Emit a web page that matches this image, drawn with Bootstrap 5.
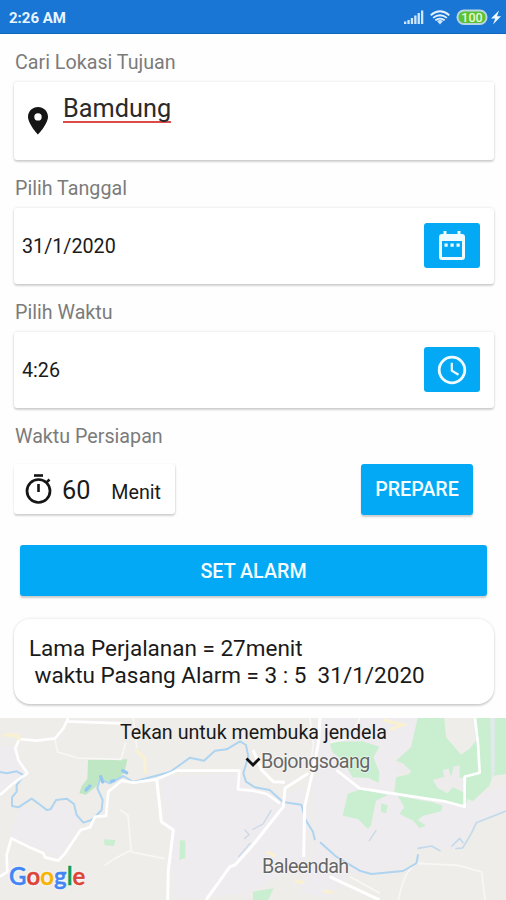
<!DOCTYPE html>
<html lang="id">
<head>
<meta charset="utf-8">
<meta name="viewport" content="width=device-width, initial-scale=1">
<title>Alarm Perjalanan</title>
<link href="https://cdn.jsdelivr.net/npm/bootstrap@5.3.0/dist/css/bootstrap.min.css" rel="stylesheet">
<style>
  body { font-family: Roboto, "Liberation Sans", sans-serif; font-size: 19.7px; line-height: 24px; color: #1a1a1a; background: #fefefe; }
  .screen { width: 506px; height: 900px; }
  .statusbar { height: 34px; background: #1976d4; border-bottom: 1px solid #1266bf; font-size: 15px; color: #e9f5ff; padding: 3px 3px 0 9px; }
  .form-area { padding: 0 12px 0 14px; height: 684px; }
  .field-label { margin: 17px 0 7px 1px; color: #7b7b7b; }
  .panel { background: #fff; border-radius: 3px; box-shadow: 0 2px 2px rgba(0,0,0,.15), 0 0 3px rgba(0,0,0,.13); }
  .panel-place { height: 78px; padding: 12px 14px; }
  .pin { margin-top: 13px; }
  .panel-pick { height: 76px; padding: 0 14px 0 8px; }
  .pick-value { padding-top: 2px; }
  .place-name { font-size: 25.3px; line-height: 29px; height: 29px; margin-left: 15px; border-bottom: 2px solid #dc4a4a; color: #2a2a2a; }
  .btn-sky { --bs-btn-bg: #03a9f4; --bs-btn-color: #f4fcff; --bs-btn-border-width: 0; --bs-btn-border-radius: 3px; --bs-btn-hover-bg: #039be5; --bs-btn-hover-color: #fff; --bs-btn-padding-x: 0; --bs-btn-padding-y: 0; --bs-btn-font-size: 19.7px; --bs-btn-font-weight: 500; height: 51px; box-shadow: 0 2px 2px rgba(0,0,0,.2); }
  .btn-pick { width: 56px; height: 45px; margin-bottom: 1px; box-shadow: none; }
  .btn-prepare { width: 112px; margin-right: 21px; padding-top: 1px; }
  .btn-set { margin: 30px 7px 0 6px; width: 467px; padding-top: 2px; }
  .prep { width: 161px; height: 50px; padding: 0 14px 0 11px; box-shadow: 0 2px 2px rgba(0,0,0,.17), 1px 0 2px rgba(0,0,0,.07); }
  .prep-num { font-size: 25.3px; margin-left: 10px; padding-top: 3px; }
  .prep-unit { padding-top: 7px; }
  .result { margin-top: 23px; height: 85px; border-radius: 16px; padding: 16px 15px; font-size: 22.5px; line-height: 27px; white-space: pre; }
  .map-area { height: 182px; background: #efedea; }
  .map-caption { top: 3px; left: 1px; right: 0; }
  .map-town { color: #666; text-shadow: 0 0 2px #fff, 0 0 2px #fff; letter-spacing: -.62px; }
  .town-a { left: 245px; top: 32px; }
  .town-b { left: 262px; top: 137px; }
  .google { left: 9px; top: 144px; font: 600 24px/28px Lato, Roboto, sans-serif; letter-spacing: .1px; text-shadow: 0 0 2px #fff, 0 0 3px #fff; -webkit-text-stroke: .5px; }
  .g-blue { color: #4285f4; } .g-red { color: #db4437; } .g-gold { color: #f4b400; } .g-green { color: #0f9d58; }
</style>
<script src="https://cdn.jsdelivr.net/npm/bootstrap@5.3.0/dist/js/bootstrap.bundle.min.js"></script>
</head>
<body>
<div class="screen d-flex flex-column overflow-hidden">
  <header class="statusbar d-flex align-items-center justify-content-between flex-shrink-0">
    <span class="fw-bold">2:26 AM</span>
    <svg width="100" height="20" viewBox="0 0 100 20" aria-hidden="true">
      <g fill="#d0e7fb">
        <path d="M1 13.500h2.300V16H1zM4.400 12h2.300v4H4.400zM7.800 10h2.300v6H7.800zM11.200 7.500h2.300V16h-2.300zM14.600 5h2.300v11h-2.300zM18 2.500h2.300V16H18z"/>
        <path d="M37 16.500l-3-3.500q3-2 6 0z"/>
      </g>
      <g fill="none" stroke="#e4f2fe" stroke-width="1.800">
        <path d="M27.700 7.200q9.300-7.800 18.600 0M30.100 9.900q6.900-5.300 13.800 0M32.300 12.300q4.700-3.400 9.400 0"/>
      </g>
      <rect x="54.500" y="2.500" width="29" height="13.500" rx="6.500" fill="#5bc236" stroke="#b9d5e4" stroke-width="2"/>
      <text x="69" y="13.800" text-anchor="middle" font-family="Roboto" font-size="12.500" font-weight="500" fill="#e6fbd6">100</text>
      <path d="M96 2.500l-8 8h4.200L90 16.500l8-8.200h-4z" fill="#eef8ff"/>
    </svg>
  </header>

  <main class="form-area flex-shrink-0 d-flex flex-column">
    <div class="field-label">Cari Lokasi Tujuan</div>
    <div class="panel panel-place d-flex align-items-start">
      <svg class="pin" width="20" height="28" viewBox="0 0 20 28"><path fill="#151515" fill-rule="evenodd" d="M10 0C4.400 0 0 4.300 0 9.700 0 17 10 27.500 10 27.500S20 17 20 9.700C20 4.300 15.600 0 10 0zm0 6.200a3.700 3.700 0 1 1 0 7.400 3.700 3.700 0 0 1 0-7.400z"/></svg>
      <div class="place-name">Bamdung</div>
    </div>

    <div class="field-label">Pilih Tanggal</div>
    <div class="panel panel-pick d-flex align-items-center justify-content-between">
      <span class="pick-value">31/1/2020</span>
      <button class="btn btn-sky btn-pick d-flex align-items-center justify-content-center" aria-label="Pilih tanggal">
        <svg width="26" height="30" viewBox="0 0 26 30"><path fill="#f0fbff" fill-rule="evenodd" d="M4.500 0h3v3h11V0h3v3H23q3 0 3 3v20q0 3-3 3H3q-3 0-3-3V6q0-3 3-3h1.500zM3 10v16h20V10zM5.500 12.500h3.200v3.200H5.500zm6 0h3.200v3.200h-3.200zm6 0h3.200v3.200h-3.200z"/></svg>
      </button>
    </div>

    <div class="field-label">Pilih Waktu</div>
    <div class="panel panel-pick d-flex align-items-center justify-content-between">
      <span class="pick-value">4:26</span>
      <button class="btn btn-sky btn-pick d-flex align-items-center justify-content-center" aria-label="Pilih waktu">
        <svg width="30" height="30" viewBox="0 0 30 30" fill="none" stroke="#f0fbff"><circle cx="15" cy="15" r="12.800" stroke-width="2.800"/><path d="M14.800 7.700v8l6.700 4" stroke-width="2.200"/></svg>
      </button>
    </div>

    <div class="field-label mb-3">Waktu Persiapan</div>
    <div class="d-flex justify-content-between" style="margin-top:-1px">
      <div class="panel prep d-flex align-items-center">
        <svg width="27" height="31" viewBox="0 0 27 31" fill="none" stroke="#151515"><path d="M9 1.500h9" stroke-width="2.600"/><circle cx="13.500" cy="17" r="11.500" stroke-width="2.700"/><path d="M13.500 10v8" stroke-width="2.600"/><path d="M21.300 8.700l3.200-3.200" stroke-width="2.600"/></svg>
        <span class="prep-num">60</span>
        <span class="prep-unit ms-auto">Menit</span>
      </div>
      <button class="btn btn-sky btn-prepare">PREPARE</button>
    </div>

    <button class="btn btn-sky btn-set flex-shrink-0">SET ALARM</button>

    <div class="panel result">Lama Perjalanan = 27menit
 waktu Pasang Alarm = 3 : 5  31/1/2020</div>
  </main>

  <section class="map-area position-relative flex-shrink-0">
    <svg class="d-block" width="506" height="182" viewBox="0 24 1518 546" preserveAspectRatio="none" aria-hidden="true">
      <!-- urban tint -->
      <g fill="#efecef">
        <path d="M0 110l40 0 30 80-70 60zM60 290l80 10 60-30 40 70-60 100-150-60z"/>
        <path d="M480 200l230-10 50 50 90 20 60-30 20 60 0 150-180 110-230 20-10-200z"/>
        <path d="M930 200l100-20 130 70 220 40 90-50 48-10v70l-90 35-60 80-120 0-40 60-160 20-60 70-90-20 50-130z"/>
        <path d="M950 24h340l-60 100-60 130-150-50-90-20z"/>
      </g>
      <!-- parks -->
      <g fill="#c9efd0">
        <path d="M264 150L382 148 374 186 348 214 318 216 300 208 290 228 258 254 238 250 244 230 262 206z" fill="#c0e7c4"/>
        <path d="M312 388l34 2-4 18-28-2zM540 390l16 2v52l-18 6z"/>
        <path d="M759 545l62-10-16 35h-46z"/>
        <g transform="translate(1008 12)">
          <path d="M-20 84L80 82 130 98 112 130 130 175 128 206 98 192 50 190 20 140-10 115z"/>
          <path d="M245 12H325L330 70 375 122 400 105 420 80 415 12H510V180L470 185 460 215 410 262 395 255 390 272 300 262 175 235 180 190 220 180 225 170 180 140 225 100z"/>
          <path d="M35 240L75 225 155 243 120 260 105 333 96 345 66 315 20 305z"/>
          <path d="M185 245L290 265 320 275 315 292 260 306 245 318 270 335 250 342 232 320 190 300 205 280z"/>
          <path d="M135 268l20 5-5 25-15-5z"/>
        </g>
      </g>
      <!-- clearings inside the parks -->
      <g fill="#eeebed" transform="translate(1008 12)">
        <path d="M290 198L325 188 320 168 338 164 346 190 352 158 372 154 370 190 392 194 386 236 350 220 335 238 305 222z"/>
        <path d="M176 138L200 148 225 172 218 180 176 176z"/>
        <path d="M463 12h13V175l-10 24z" fill="#e1e9ec"/>
      </g>
      <!-- minor roads -->
      <g fill="none" stroke="#f8f7f5" stroke-width="5">
        <path d="M165 90l8 36 60 18 130 4 14-50M360 300l24 16 10 110 100 20M394 420l-50 26-30 20M400 24l10 90"/>
        <path d="M930 24l10 80-10 70M1195 570q20-100 60-110l120 6 70 20 10 84M1050 500l90 50"/>
        <path d="M1080 24l-30 60-60 14"/>
      </g>
      <!-- rivers -->
      <g fill="none" stroke="#aed4f0" stroke-width="6" stroke-linejoin="round" stroke-linecap="round">
        <path d="M0 186L20 190 50 184 72 196 50 225 50 245 36 262 36 288 55 292 95 266 125 288 140 300 152 298 168 270 200 266 222 282 230 315 250 338 275 330 305 300 308 270 292 235 300 208 330 220 370 198 400 216 440 205 510 186 570 143 612 152 645 122 680 118 720 94 738 105 745 140 730 190 738 215 765 232 809 240 849 276 904 284 917 330 939 365 944 388"/>
        <path d="M962 398L1009 440 1079 482 1114 492 1209 483 1249 460 1254 435"/>
        <path d="M1254 415L1295 408 1320 422M1356 408L1379 385 1389 398M1368 416L1388 414 1414 370 1429 338 1518 303" stroke="#c3d9ec" stroke-width="5"/>
        <path d="M1108 392l20-30M735 360l12 14-14 12M750 400l-34 40M759 358l30-16 24-40" stroke="#c8d8e8" stroke-width="4"/>
        <path d="M258 240l12-12M302 200l6 16M334 214l8-2M368 182l12 6" stroke="#94c7f0" stroke-width="10"/>
      </g>
      <!-- main roads -->
      <g fill="none" stroke="#fff" stroke-width="9" stroke-linejoin="round">
        <path d="M205 24L190 55 165 85 110 92 58 87 46 115 55 150 82 190 40 220 0 255M200 34L365 40" stroke-width="8"/>
        <path d="M0 500L22 485 20 435 34 385 85 410 130 430 135 442 175 452 195 430 242 360 270 352 285 320 318 318 325 245 365 212 400 218 470 208 530 182H718L714 238 759 242 800 252 840 280" stroke-width="8"/>
        <path d="M470 206L484 335 520 360 505 480 503 570M618 570L690 470 705 465 759 405 850 290 855 235 925 190"/>
        <path d="M759 120L785 180 820 215 855 217M960 24L955 100 939 180 914 290 911 440M989 500L1139 570"/>
        <path d="M1009 180L1079 235 1339 275 1394 290 1394 200 1439 188 1434 100 1425 24" stroke-width="8"/>
      </g>
      <g fill="none" stroke="#faf1d0" stroke-width="9">
        <path d="M8 76h42l10 14M408 120l24 24 4 46M1150 30l60 14-40 14M885 512l28 6M970 542l28 6M800 425l26 14"/>
      </g>
    </svg>
    <div class="map-caption position-absolute text-center">Tekan untuk membuka jendela</div>
    <div class="map-town town-a position-absolute d-flex align-items-center">
      <svg width="16" height="12" viewBox="0 0 16 12" class="flex-shrink-0"><path d="M1.500 2.500L8 9l6.500-6.500" fill="none" stroke="#111" stroke-width="2.800"/></svg><span>Bojongsoang</span>
    </div>
    <div class="map-town town-b position-absolute">Baleendah</div>
    <div class="google position-absolute"><span class="g-blue">G</span><span class="g-red">o</span><span class="g-gold">o</span><span class="g-blue">g</span><span class="g-green">l</span><span class="g-red">e</span></div>
  </section>
</div>
</body>
</html>
